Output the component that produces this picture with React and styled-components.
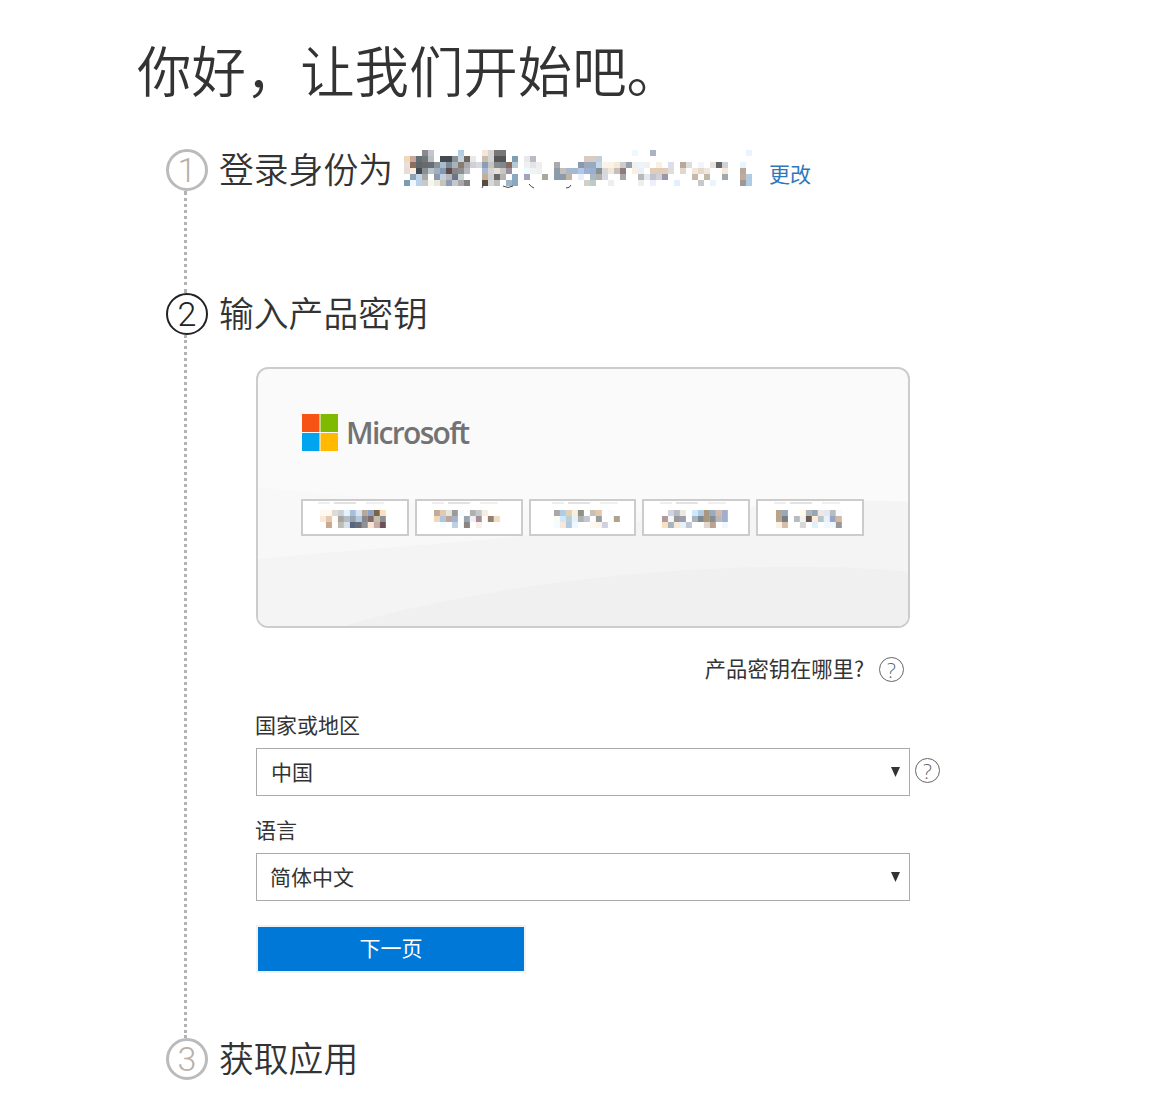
import React from 'react';
import styled, { createGlobalStyle } from 'styled-components';

const CJK = `"Noto Sans CJK SC", "Liberation Sans", sans-serif`;

//Pixelated email, one entry per row: [column, colour]
const emailCells = [
  [[3,'#8a8a8a'],[4,'#c5c5d0'],[9,'#b0cde4'],[13,'#f5e6d8'],[14,'#d8d4d0'],[15,'#777777'],[16,'#777777'],[38,'#eef8ff'],[41,'#a8b4c4'],[57,'#e8f4ff']],
  [[0,'#f0d8b8'],[1,'#c8a898'],[2,'#666e74'],[3,'#70787e'],[4,'#b8c0c8'],[6,'#444a50'],[7,'#444a50'],[8,'#889098'],[9,'#c8d4dc'],[10,'#6e665e'],[11,'#e8e8e8'],[13,'#c8bdb0'],[14,'#d4d4d4'],[15,'#555555'],[16,'#555555'],[18,'#7e9eb4'],[20,'#e8e8e8'],[21,'#bbbbc8'],[30,'#d8ccc0'],[31,'#d8ccc0'],[32,'#c8ccd8']],
  [[0,'#e8e0d8'],[1,'#8c6e60'],[2,'#5f666d'],[3,'#6a6a6a'],[4,'#6a6e72'],[5,'#8a9298'],[6,'#a8bccc'],[7,'#7a8a96'],[8,'#a8b4bc'],[9,'#8a7a6e'],[10,'#aaaaaa'],[11,'#d0d0d8'],[12,'#d8d8e0'],[13,'#909cb0'],[14,'#c4c4c4'],[15,'#8a8a8a'],[16,'#7a8a90'],[17,'#8a6a5a'],[18,'#b8c8d4'],[20,'#f0f0f0'],[21,'#e4e4e8'],[22,'#eeeeee'],[25,'#aaaaaa'],[29,'#8a98a8'],[30,'#9aa8c0'],[31,'#9aa8c0'],[32,'#c0d8f0'],[33,'#fbf3e6'],[34,'#fbf3e6'],[35,'#f5ead8'],[36,'#cccccc'],[37,'#98a0ac'],[38,'#f0f0f0'],[39,'#eaf5ff'],[40,'#f5f0ee'],[42,'#f8f0e0'],[44,'#ddddee'],[46,'#b8a898'],[47,'#dddddd'],[49,'#f0f6fc'],[51,'#e8e0dc'],[52,'#666666'],[53,'#d0d0d8'],[56,'#e8f4ff']],
  [[0,'#e6dcd8'],[1,'#fbeedc'],[2,'#444b52'],[3,'#8a8f94'],[4,'#b8c2cc'],[5,'#a0aec4'],[6,'#8498b4'],[7,'#5c4c50'],[8,'#8c8480'],[9,'#8a8f94'],[10,'#b8b8c0'],[13,'#a8b8d8'],[14,'#d8d4d0'],[15,'#e4e0dc'],[16,'#c8c4c0'],[17,'#9890a0'],[20,'#f0fbff'],[21,'#f0f4f4'],[22,'#f0f0f0'],[25,'#8f9ca8'],[26,'#c4c0b8'],[27,'#a8b8d0'],[28,'#a8b8d0'],[29,'#b0c8e8'],[30,'#a0b0d0'],[31,'#98b0d0'],[32,'#8a8f94'],[33,'#d8d8d8'],[34,'#f0e8dc'],[35,'#c8c0b8'],[36,'#8f7a80'],[38,'#f8f0e0'],[39,'#e8f0f8'],[41,'#e0ccb8'],[42,'#e0ccb8'],[43,'#e0ccb8'],[44,'#dddddd'],[46,'#e0d8cc'],[48,'#f0e6dc'],[49,'#e8d8c8'],[50,'#f0e8dc'],[53,'#f8e8d8'],[56,'#b8a898']],
  [[1,'#8ca4b8'],[2,'#c0d4e8'],[3,'#a8a8a8'],[5,'#8c98a8'],[6,'#c0d0e0'],[7,'#b8b8b8'],[8,'#6c7488'],[9,'#c8d4d4'],[13,'#c4ae98'],[14,'#d0d0d0'],[15,'#686868'],[16,'#b4b4b4'],[18,'#8aa8c0'],[20,'#a4a4b8'],[23,'#a8a8a0'],[25,'#8a9caa'],[26,'#8a9caa'],[27,'#c4b4a4'],[29,'#e8f0f8'],[31,'#a8b8c4'],[32,'#b0b0a8'],[33,'#d8d8e0'],[36,'#a8a8a8'],[39,'#b8b8b8'],[40,'#e0e8f0'],[41,'#c0c4d0'],[42,'#d0d0d8'],[43,'#9898a8'],[48,'#c8b8a8'],[50,'#c0b8a8'],[53,'#a0a8b0'],[56,'#c4aa98'],[57,'#b0cce4']],
  [[0,'#7c9cb4'],[1,'#f0f8ff'],[2,'#b8d0e8'],[3,'#c8c8c8'],[4,'#fbf6ec'],[5,'#e8e8e0'],[6,'#c8c4b8'],[7,'#8c9cb8'],[8,'#c4c8d0'],[9,'#a8a8a8'],[10,'#808080'],[13,'#5a4a44'],[14,'#d8d8d8'],[15,'#c0c0c0'],[17,'#a0b4c8'],[18,'#8aa8c0'],[30,'#d0d0c8'],[31,'#bcccc4'],[34,'#eeeeee'],[39,'#eeeeee'],[41,'#eeeeff'],[45,'#e0f0ff'],[49,'#c8c8c8'],[51,'#e8f4ff'],[56,'#999999'],[57,'#b0cce4']],
];

//Pixelated product key groups, three rows of colours each ('' leaves a cell empty)
const keyGroups = [
  {
    offset: 19,
    rows: [
      ['#fff8ee','#fff8ee','#e0dad4','#c8d0d8','#e8f0f8','#a8bede','#d8e4f0','#b8a89c','#90a0c0','#7a6448','#f8e0c0'],
      ['#f8e8d8','#e4c8b0','#fffaf4','#a8a49c','#b0bcc8','#98a4a8','#b0c8e4','#888888','#7c6c70','#c4c0a8','#8c9094'],
      ['','#c8a890','','#c0bcb4','#d8e0ec','#586480','#686c74','#90929a','#f8e4d0','#c4aca8','#705058'],
    ],
  },
  {
    offset: 19,
    rows: [
      ['#c0ac98','#e4c8b0','#e0e8e0','#a09a94','#f4fcff','','#b0b0b0','#c0c8d0','#f8ecdc','',''],
      ['#f0d8b8','#b0c4e0','#c0a498','#a0b4d0','','#9aa4b0','#f0f0f8','#a88c94','#fffdf8','#988070','#f0dcc0'],
      ['','#f4fcff','','#c0d0e4','','#8c8480','','#f8f0e8','','',''],
    ],
  },
  {
    offset: 25,
    rows: [
      ['#a8a8a8','#b0cce4','#e0d0b8','#fceedc','#8c9488','','#c8c0b8','#e4c8a8','','#f8fcff',''],
      ['#fcfcf4','#d0e8f8','#b8d0d0','#e8f0f8','#b0b0b0','#c0c8d0','','#989ca0','','','#b0a090'],
      ['#f4fcff','#f8e8d8','#b0c8e0','#f0f8ff','','','#fcf8f0','#fdf6e8','#d0d0e0','',''],
    ],
  },
  {
    offset: 20,
    rows: [
      ['','#d0d4e0','#b8bcc8','#f0e8e0','','#d0e8fc','#b0cce4','#a89880','#98acc0','#d4b8a8','#a0b0cc'],
      ['#b0989c','#f4f8f8','#989898','#9c9cb0','','#a4b4c0','#808890','#a89880','#888c94','#b8b8b8','#a0b0cc'],
      ['#f8e0c0','#a8b4bc','#f4e8d8','#e8f0f8','#c0c8d4','','','#e0d8d0','#b8a490','','#f0f8ff'],
    ],
  },
  {
    offset: 20,
    rows: [
      ['#b8a48c','#98a8b8','','','#fcfce8','#b0b4b4','#98a4b8','#f0e8e0','#e0e8f4','#b8bcc0','#f4fcff'],
      ['#b8a48c','#787c88','','#b8bcc0','#f4f4f0','#6c5c58','#fcecd8','#b8c4c8','#e8f0fc','#98a4c4','#d4b8a4'],
      ['#fcf0e4','#d4c0a8','','','#d8d8d8','','#e0f0f8','','#f0f8ff','#f0f8ff','#989898'],
    ],
  },
];

const GlobalStyle = createGlobalStyle`
  body {
    margin: 0;
    background: #fff;
    color: #333;
    font-family: ${CJK};
  }
`;

const Page = styled.main`
  width: 1174px;
  min-height: 1117px;
  box-sizing: border-box;
  padding: 37px 0 0 137px;
`;

const Heading = styled.h1`
  margin: 0 0 48px;
  font-size: 54.4px;
  line-height: 64px;
  font-weight: 350;
  color: #333;
`;

const Steps = styled.div`
  margin-left: 29px;
`;

const Step = styled.section`
  display: grid;
  grid-template-columns: 42px 1fr;
  column-gap: 10px;
`;

const Rail = styled.div`
  display: flex;
  flex-direction: column;
  align-items: center;
`;

const Circle = styled.div`
  width: 42px;
  height: 42px;
  flex: none;
  box-sizing: border-box;
  border-radius: 50%;
  border: ${(p) => (p.$active ? '2.5px solid #222' : '3px solid #bbb')};
  color: ${(p) => (p.$active ? '#222' : '#b8b0a8')};
  display: flex;
  align-items: center;
  justify-content: center;
  font-family: Roboto, sans-serif;
  font-weight: 300;
  font-size: 34px;
`;

const Dots = styled.div`
  flex: 1;
  width: 0;
  margin-right: 3px;
  border-left: 3px dotted #b3b3b3;
`;

const Body = styled.div`
  min-height: ${(p) => p.$height || 42}px;
`;

const TitleRow = styled.div`
  display: flex;
  align-items: flex-start;
  height: 42px;
`;

const Title = styled.h2`
  margin: 0 0 0 1px;
  font-size: 34.8px;
  line-height: 38px;
  font-weight: 350;
  color: #333;
`;

const Email = styled.svg`
  display: block;
  width: 349px;
  height: 36px;
  margin: 1px 0 0 11px;
  overflow: visible;
`;

const ChangeLink = styled.a`
  margin: 10px 0 0 16px;
  font-size: 21px;
  line-height: 28px;
  color: #2e77bd;
`;

const Form = styled.div`
  margin-left: 38px;
  width: 654px;
  padding-bottom: 65px;
`;

const Card = styled.div`
  position: relative;
  box-sizing: border-box;
  margin-top: 32px;
  height: 261px;
  padding: 45px 44px 0;
  border: 2px solid #ccc;
  border-radius: 12px;
  background: #fafafa;
  overflow: hidden;
`;

const Waves = styled.svg`
  position: absolute;
  left: 0;
  top: 0;
  width: 650px;
  height: 257px;
`;

const Brand = styled.div`
  position: relative;
  display: flex;
  align-items: center;
  gap: 8px;
  height: 37px;
`;

const BrandName = styled.span`
  font-family: "Open Sans", sans-serif;
  font-weight: 600;
  font-size: 30px;
  letter-spacing: -1.7px;
  color: #737373;
`;

const KeyRow = styled.div`
  position: relative;
  display: flex;
  gap: 6px;
  width: 563px;
  margin: 48px 0 0 -1px;
`;

const KeyBox = styled.div`
  flex: 1;
  height: 37px;
  box-sizing: border-box;
  border: 2px solid #ccc;
  background: #fff;
`;

const KeyMosaic = styled.svg`
  display: block;
  width: 100%;
  height: 100%;
`;

const HelpRow = styled.div`
  display: flex;
  justify-content: flex-end;
  align-items: center;
  gap: 15px;
  height: 25px;
  margin-top: 29px;
  padding-right: 6px;
  font-size: 21.3px;
  color: #333;
`;

const HelpText = styled.span`
  padding-bottom: 5px;
`;

const Help = styled.span`
  width: 25px;
  height: 25px;
  flex: none;
  box-sizing: border-box;
  border: 1px solid #666;
  border-radius: 50%;
  display: flex;
  align-items: center;
  justify-content: center;
  color: #666;
  font-family: "Open Sans", sans-serif;
  font-size: 21px;
  font-weight: 300;
`;

const FieldLabel = styled.div`
  margin: ${(p) => p.$top}px 0 12px -1px;
  font-size: 21px;
  line-height: 24px;
  color: #333;
`;

const FieldRow = styled.div`
  display: flex;
  width: 684px;
  gap: 5px;
  align-items: flex-start;
`;

const FieldHelp = styled(Help)`
  margin-top: 10px;
`;

const Select = styled.div`
  width: 654px;
  height: 48px;
  flex: none;
  box-sizing: border-box;
  border: 1px solid #aaa;
  display: flex;
  align-items: center;
  justify-content: space-between;
  padding: 0 9px 2px ${(p) => p.$pad}px;
  font-size: 21px;
  color: #333;
`;

const Arrow = styled.svg`
  width: 9px;
  height: 10px;
  margin-top: 2px;
  flex: none;
`;

const NextButton = styled.button`
  display: block;
  box-sizing: border-box;
  margin-top: 24px;
  width: 270px;
  height: 48px;
  border: 2px solid #f2f2f2;
  background: #0078d7;
  background-clip: padding-box;
  color: #fff;
  font-family: ${CJK};
  font-size: 21px;
  padding: 0 0 4px;
`;

const MicrosoftLogo = () => (
  <svg width="36" height="37" viewBox="0 0 36 37" aria-hidden="true">
    <rect x="0" y="0" width="17.5" height="18" fill="#f65314" />
    <rect x="18.5" y="0" width="17.5" height="18" fill="#7fba00" />
    <rect x="0" y="19" width="17.5" height="18" fill="#00a4ef" />
    <rect x="18.5" y="19" width="17.5" height="18" fill="#ffb900" />
  </svg>
);

const DownArrow = () => (
  <Arrow viewBox="0 0 9 10" aria-hidden="true">
    <path d="M0 0h9L4.5 10z" fill="#333" />
  </Arrow>
);

const EmailBlur = () => (
  <Email viewBox="0 0 349 36" aria-hidden="true">
    {emailCells.map((row, y) =>
      row.map(([x, color]) => (
        <rect key={`${x}-${y}`} x={x * 6} y={y * 6} width="6" height="6" fill={color} />
      ))
    )}
    {/* bits of the name that stick out under the blur */}
    <path d="M79 36l-1 2M99 36q5 3 10 0M125 34q2 3 5 4M162 38q4 0 5-3" fill="none" stroke="#444" />
  </Email>
);

const KeyBlur = ({ group }) => (
  <KeyBox>
    <KeyMosaic viewBox="0 0 104 33" preserveAspectRatio="none" aria-hidden="true">
      <rect x={group.offset - 4} y="1" width="12" height="2" fill="#eeeeee" />
      <rect x={group.offset + 12} y="1" width="22" height="2" fill="#e2e2e2" />
      <rect x={group.offset + 44} y="1" width="18" height="2" fill="#efefef" />
      {group.rows.map((row, y) =>
        row.map((color, x) =>
          color ? (
            <rect key={`${x}-${y}`} x={group.offset + x * 6 - 2} y={9 + y * 6} width="6" height="6" fill={color} />
          ) : null
        )
      )}
    </KeyMosaic>
  </KeyBox>
);

export default function App() {
  return (
    <>
      <GlobalStyle />
      <Page>
        <Heading>{'你好\uFF0C让我们开始吧。'}</Heading>
        <Steps>
          <Step>
            <Rail>
              <Circle>1</Circle>
              <Dots />
            </Rail>
            <Body $height={144}>
              <TitleRow>
                <Title>登录身份为</Title>
                <EmailBlur />
                <ChangeLink>更改</ChangeLink>
              </TitleRow>
            </Body>
          </Step>

          <Step>
            <Rail>
              <Circle $active>2</Circle>
              <Dots />
            </Rail>
            <Body>
              <TitleRow>
                <Title>输入产品密钥</Title>
              </TitleRow>
              <Form>
                <Card>
                  <Waves viewBox="0 0 650 257" aria-hidden="true">
                    <path d="M0 118C120 130 300 150 420 142C520 136 600 128 650 133V257H0Z" fill="#f8f8f8" />
                    <path d="M0 190C120 178 240 172 340 158C450 142 560 128 650 133V257H0Z" fill="#f4f4f4" />
                    <path d="M86 257C200 222 370 200 507 198C570 197 620 199 650 203V257Z" fill="#f0f0f0" />
                  </Waves>
                  <Brand>
                    <MicrosoftLogo />
                    <BrandName>Microsoft</BrandName>
                  </Brand>
                  <KeyRow>
                    {keyGroups.map((group) => (
                      <KeyBlur key={group.offset + group.rows[0][0]} group={group} />
                    ))}
                  </KeyRow>
                </Card>

                <HelpRow>
                  <HelpText>产品密钥在哪里?</HelpText>
                  <Help>?</Help>
                </HelpRow>

                <FieldLabel $top={30}>国家或地区</FieldLabel>
                <FieldRow>
                  <Select $pad={14}>
                    中国
                    <DownArrow />
                  </Select>
                  <FieldHelp>?</FieldHelp>
                </FieldRow>

                <FieldLabel $top={21}>语言</FieldLabel>
                <FieldRow>
                  <Select $pad={13}>
                    简体中文
                    <DownArrow />
                  </Select>
                </FieldRow>

                <NextButton type="button">下一页</NextButton>
              </Form>
            </Body>
          </Step>

          <Step>
            <Rail>
              <Circle>3</Circle>
            </Rail>
            <Body>
              <TitleRow>
                <Title>获取应用</Title>
              </TitleRow>
            </Body>
          </Step>
        </Steps>
      </Page>
    </>
  );
}
